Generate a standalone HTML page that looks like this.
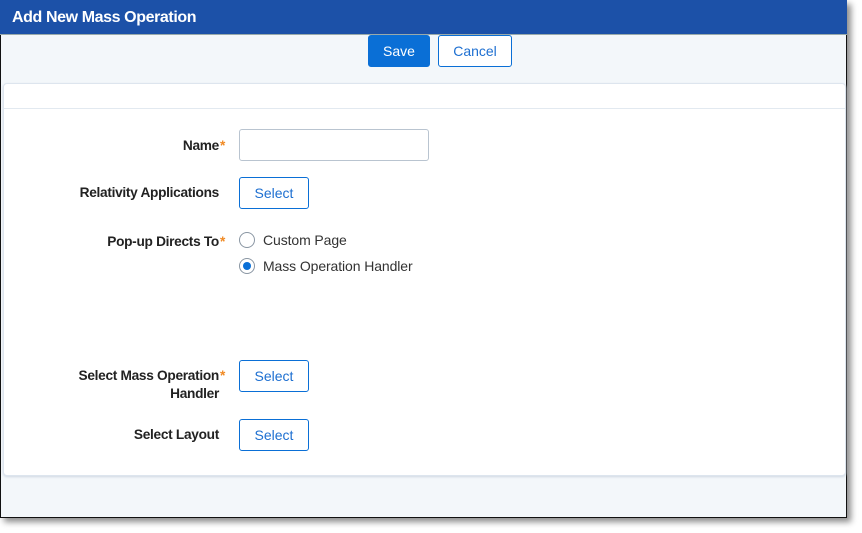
<!DOCTYPE html>
<html><head><style>
*{margin:0;padding:0;box-sizing:border-box}
body{width:862px;height:533px;background:#fff;font-family:"Liberation Sans",sans-serif;position:relative;overflow:hidden}
.win{position:absolute;left:0;top:0;width:847px;height:518px;background:#f3f7fa;border:1px solid #111;box-shadow:4px 4px 6px rgba(0,0,0,.45)}
.hdr{position:absolute;left:-1px;top:-1px;width:847px;height:35px;background:#1c51a8;color:#fff;font-weight:bold;font-size:16px;line-height:35px;padding-left:12px;letter-spacing:-.4px;border-bottom:1px solid #9aa}
.btn{position:absolute;height:32px;border-radius:3px;font-size:14px;text-align:center;line-height:30px;border:1px solid #0a6fd6;color:#1d6fd1;background:#fff}
.save{background:#0a6fd6;color:#fff}
.card{position:absolute;left:2px;top:82px;width:843px;height:393px;background:#fff;border:1px solid #dde5ee;border-radius:4px;box-shadow:0 1px 2px #cfd8e3}
.sep{position:absolute;left:0;right:0;top:24px;border-top:1px solid #e2e9f0}
.lbl{position:absolute;right:627px;font-weight:bold;font-size:13.7px;color:#222;text-align:right;letter-spacing:-.3px;line-height:18px}
.lbl i{position:absolute;left:100%;margin-left:1px;color:#f08a24;font-style:normal}
.inp{position:absolute;left:238px;top:128px;width:190px;height:32px;border:1px solid #b9c4d0;border-radius:3px;background:#fff}
.radio{position:absolute;left:238px;width:16px;height:16px;border:1px solid #8a96a3;border-radius:50%;background:#fff}
.radio.on::after{content:"";position:absolute;left:3px;top:3px;width:8px;height:8px;border-radius:50%;background:#0a6fd6}
.rt{position:absolute;left:262px;font-size:14px;color:#333;letter-spacing:-.1px}
</style></head><body>
<div class="win">
<div class="hdr">Add New Mass Operation</div>
<div class="btn save" style="left:367px;top:34px;width:62px">Save</div>
<div class="btn" style="left:437px;top:34px;width:74px">Cancel</div>
<div class="card"><div class="sep"></div></div>
<div class="lbl" style="top:136px">Name<i>*</i></div>
<div class="inp"></div>
<div class="lbl" style="top:183px">Relativity Applications</div>
<div class="btn" style="left:238px;top:176px;width:70px">Select</div>
<div class="lbl" style="top:232px">Pop-up Directs To<i>*</i></div>
<div class="radio" style="top:231px"></div><div class="rt" style="top:231px">Custom Page</div>
<div class="radio on" style="top:257px"></div><div class="rt" style="top:257px">Mass Operation Handler</div>
<div class="lbl" style="top:366px">Select Mass Operation<i>*</i><br>Handler</div>
<div class="btn" style="left:238px;top:359px;width:70px">Select</div>
<div class="lbl" style="top:425px">Select Layout</div>
<div class="btn" style="left:238px;top:418px;width:70px">Select</div>
</div>
</body></html>
